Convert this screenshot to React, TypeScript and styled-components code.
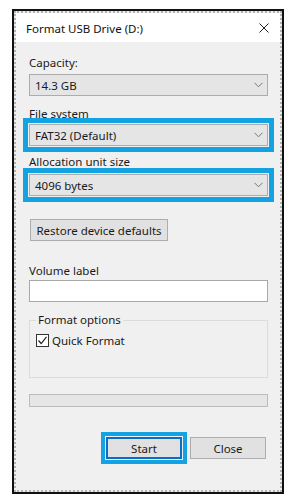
import React from "react";
import styled, { createGlobalStyle } from "styled-components";

const Global = createGlobalStyle`
  html, body { margin: 0; padding: 0; background: #ffffff; }
  body { font-family: "Noto Sans", "Open Sans", sans-serif; font-size: 11.5px; color: #000; }
  * { box-sizing: border-box; }
`;

const Page = styled.div`
  width: 293px;
  height: 498px;
  padding: 9px 9px 4px 12px;
`;

const Frame = styled.div`
  width: 272px;
  height: 485px;
  border: 2px solid #111;
  display: flex;
  flex-direction: column;
`;

const Inner = styled.div`
  flex: 1;
  border: 2px dotted #b4b4b4;
  display: flex;
  flex-direction: column;
  background: #f0f0f0;
`;

const TitleBar = styled.div`
  height: 29px;
  background: #ffffff;
  display: flex;
  align-items: center;
  justify-content: space-between;
  padding: 1px 11px 0 10px;
  font-size: 11.5px;
  color: #111;
`;

const Content = styled.div`
  flex: 1;
  display: flex;
  flex-direction: column;
  padding: 13px 12px 0 13px;
`;

const Label = styled.div<{ $mt?: number }>`
  height: 16px;
  line-height: 16px;
  margin-top: ${(p) => p.$mt ?? 0}px;
  color: #1a1a1a;
`;

const Select = styled.div<{ $highlight?: boolean; $mt?: number }>`
  height: 22px;
  margin-top: ${(p) => p.$mt ?? 3}px;
  background: #e5e5e5;
  border: 1px solid #acacac;
  display: flex;
  align-items: center;
  justify-content: space-between;
  padding: 0 4px 0 5px;
  outline: ${(p) => (p.$highlight ? "5px solid #14a3e2" : "none")};
  outline-offset: 1px;
  color: #1a1a1a;
`;

const Button = styled.div<{ $default?: boolean; $width: number }>`
  width: ${(p) => p.$width}px;
  height: 22px;
  background: #e1e1e1;
  border: 1px solid ${(p) => (p.$default ? "#0a6fc4" : "#adadad")};
  box-shadow: ${(p) => (p.$default ? "inset 0 0 0 1px #0a6fc4" : "none")};
  outline: ${(p) => (p.$default ? "4px solid #14a3e2" : "none")};
  outline-offset: 1px;
  display: flex;
  align-items: center;
  justify-content: center;
  color: #1a1a1a;
`;

const RestoreRow = styled.div`
  margin-top: 23px;
  padding-left: 1px;
`;

const TextInput = styled.div`
  height: 22px;
  margin-top: 1px;
  background: #ffffff;
  border: 1px solid #a8a8a8;
`;

const Group = styled.fieldset`
  margin: 10px 0 0 0;
  padding: 5px 6px 0 6px;
  height: 66px;
  border: 1px solid #dcdcdc;
  border-radius: 0;
  legend {
    padding: 0 2px;
    margin-left: 0px;
    line-height: 16px;
    color: #1a1a1a;
  }
`;

const CheckRow = styled.label`
  display: flex;
  align-items: center;
  gap: 3px;
  color: #1a1a1a;
`;

const Box = styled.span`
  width: 13px;
  height: 13px;
  border: 1px solid #333;
  background: #fff;
  display: flex;
  align-items: center;
  justify-content: center;
`;

const Progress = styled.div`
  height: 13px;
  margin-top: 16px;
  background: #e6e6e6;
  border: 1px solid #bcbcbc;
`;

const ButtonRow = styled.div`
  margin-top: 30px;
  display: flex;
  justify-content: flex-end;
  gap: 8px;
  padding-right: 2px;
`;

const Chevron = () => (
  <svg width="9" height="6" viewBox="0 0 9 6">
    <path d="M0.5 0.8 L4.5 4.8 L8.5 0.8" fill="none" stroke="#777" strokeWidth="1" />
  </svg>
);

const CloseX = () => (
  <svg width="10" height="10" viewBox="0 0 10 10">
    <path d="M0.5 0.5 L9.5 9.5 M9.5 0.5 L0.5 9.5" stroke="#222" strokeWidth="1" />
  </svg>
);

const Check = () => (
  <svg width="11" height="11" viewBox="0 0 11 11">
    <path d="M1.5 5.5 L4.2 8.5 L9.5 1.8" fill="none" stroke="#222" strokeWidth="1.2" />
  </svg>
);

export default function App() {
  return (
    <>
      <Global />
      <Page>
        <Frame>
          <Inner>
            <TitleBar>
              <span>Format USB Drive (D:)</span>
              <CloseX />
            </TitleBar>
            <Content>
              <Label>Capacity:</Label>
              <Select>
                <span>14.3 GB</span>
                <Chevron />
              </Select>
              <Label $mt={10}>File system</Label>
              <Select $highlight $mt={2}>
                <span>FAT32 (Default)</span>
                <Chevron />
              </Select>
              <Label $mt={8}>Allocation unit size</Label>
              <Select $highlight $mt={4}>
                <span>4096 bytes</span>
                <Chevron />
              </Select>
              <RestoreRow>
                <Button $width={138}>Restore device defaults</Button>
              </RestoreRow>
              <Label $mt={22}>Volume label</Label>
              <TextInput />
              <Group>
                <legend>Format options</legend>
                <CheckRow>
                  <Box>
                    <Check />
                  </Box>
                  Quick Format
                </CheckRow>
              </Group>
              <Progress />
              <ButtonRow>
                <Button $default $width={76}>Start</Button>
                <Button $width={76}>Close</Button>
              </ButtonRow>
            </Content>
          </Inner>
        </Frame>
      </Page>
    </>
  );
}
